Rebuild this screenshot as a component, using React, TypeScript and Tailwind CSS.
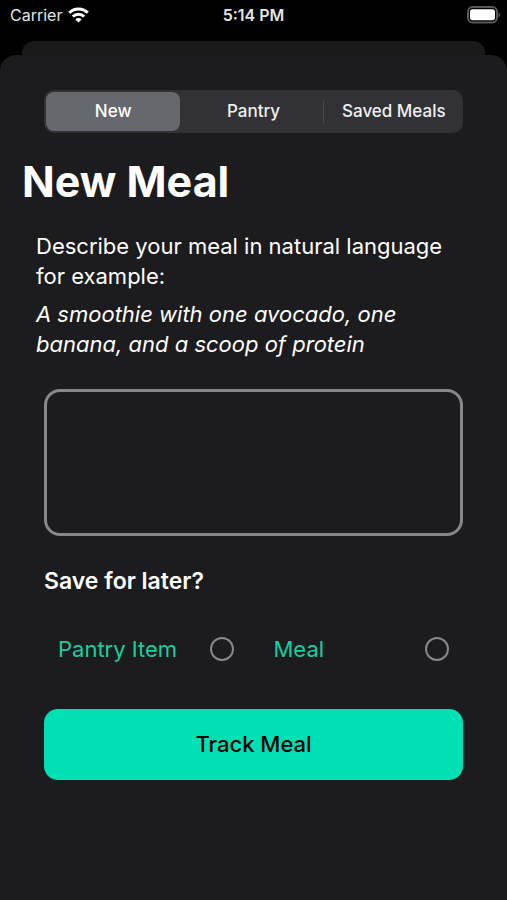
import { Fragment, useState } from 'react'

const TABS = ['New', 'Pantry', 'Saved Meals']

const SAVE_OPTIONS = [
  { id: 'pantry-item', label: 'Pantry Item' },
  { id: 'meal', label: 'Meal' },
]

function WifiIcon() {
  return (
    <svg width="21" height="16" viewBox="0 0 21 16" fill="none" stroke="#fff" strokeWidth="3" aria-hidden="true">
      <path d="M1.2 5.8a13.2 13.2 0 0 1 18.6 0" />
      <path d="M4.8 9.5a8.1 8.1 0 0 1 11.4 0" />
      <path d="m10.5 15.6-3.1-3.2a4.4 4.4 0 0 1 6.2 0Z" fill="#fff" stroke="none" />
    </svg>
  )
}

function BatteryIcon() {
  return (
    <svg width="34" height="18" viewBox="0 0 34 18" aria-hidden="true">
      <rect x="1" y="1" width="29" height="15.4" rx="4.6" fill="none" stroke="#58585a" strokeWidth="2" />
      <rect x="3" y="3.2" width="25" height="11" rx="2.6" fill="#fff" />
      <path d="M31.6 6.2c2 .8 2 4.3 0 5.1Z" fill="#58585a" />
    </svg>
  )
}

function StatusBar() {
  return (
    <div className="grid h-[41px] grid-cols-3 items-start px-[6px] pt-[3px] text-base leading-6 text-[#e4e4e4]">
      <div className="flex items-center gap-[6px] pl-1">
        <span>Carrier</span>
        <WifiIcon />
      </div>
      <span className="text-center font-semibold">5:14 PM</span>
      <div className="flex h-6 items-center justify-end">
        <BatteryIcon />
      </div>
    </div>
  )
}

export default function App() {
  const [activeTab, setActiveTab] = useState('New')
  const [description, setDescription] = useState('')
  const [saveAs, setSaveAs] = useState<string[]>([])

  const toggleSave = (id: string) => {
    setSaveAs((prev) => (prev.includes(id) ? prev.filter((item) => item !== id) : [...prev, id]))
  }

  return (
    <div className="flex min-h-screen flex-col bg-black font-['Inter','Liberation_Sans',sans-serif] text-white">
      <StatusBar />

      {/* Edge of the screen behind the sheet */}
      <div className="mx-[22px] h-[14px] rounded-t-xl bg-[#1a1a1a]" />

      <main className="flex-1 rounded-t-2xl bg-[#1c1c1e] px-[22px] pt-[35px] pb-10">
        <div className="mx-[22px] flex h-[43px] items-center rounded-[10px] bg-[#313136] p-[2px]" role="tablist">
          {TABS.map((tab, i) => (
            <Fragment key={tab}>
              {i > 0 && (
                <div className="flex w-[6px] justify-center">
                  {activeTab !== tab && activeTab !== TABS[i - 1] && <span className="h-6 w-px bg-[#46464b]" />}
                </div>
              )}
              <button
                type="button"
                role="tab"
                aria-selected={activeTab === tab}
                onClick={() => setActiveTab(tab)}
                className={`h-full flex-1 basis-0 rounded-lg text-[17px] font-medium whitespace-nowrap ${
                  activeTab === tab ? 'bg-[#67686e] text-white' : 'text-[#f0f0f0]'
                }`}
              >
                {tab}
              </button>
            </Fragment>
          ))}
        </div>

        <h1 className="mt-5 text-[43px] leading-[56px] font-bold">New Meal</h1>

        <div className="mt-[22px] px-[14px] text-[22px] leading-[30px]">
          <p>Describe your meal in natural language for example:</p>
          <p className="mt-2 italic">A smoothie with one avocado, one banana, and a scoop of protein</p>
        </div>

        <div className="px-[22px]">
          <textarea
            aria-label="Meal description"
            value={description}
            onChange={(e) => setDescription(e.target.value)}
            className="mt-[30px] block h-[147px] w-full resize-none rounded-2xl border-[3px] border-[#88888a] bg-transparent p-3 text-[22px] outline-none"
          />

          <h2 className="mt-[30px] text-[23px] leading-[30px] font-semibold">Save for later?</h2>

          <div className="mt-[38px] grid grid-cols-2 gap-10 px-[14px]">
            {SAVE_OPTIONS.map(({ id, label }) => (
              <div key={id} className="flex items-center justify-between">
                <label htmlFor={id} className="text-[22px] leading-[30px] text-[#1acd9e]">
                  {label}
                </label>
                <input
                  id={id}
                  type="checkbox"
                  checked={saveAs.includes(id)}
                  onChange={() => toggleSave(id)}
                  className="size-6 appearance-none rounded-full border-2 border-[#88888a] checked:bg-[#00e0b5]"
                />
              </div>
            ))}
          </div>

          <button type="button" className="mt-[45px] h-[71px] w-full rounded-[14px] bg-[#00e0b5] text-[22px] font-medium text-black">
            Track Meal
          </button>
        </div>
      </main>
    </div>
  )
}
